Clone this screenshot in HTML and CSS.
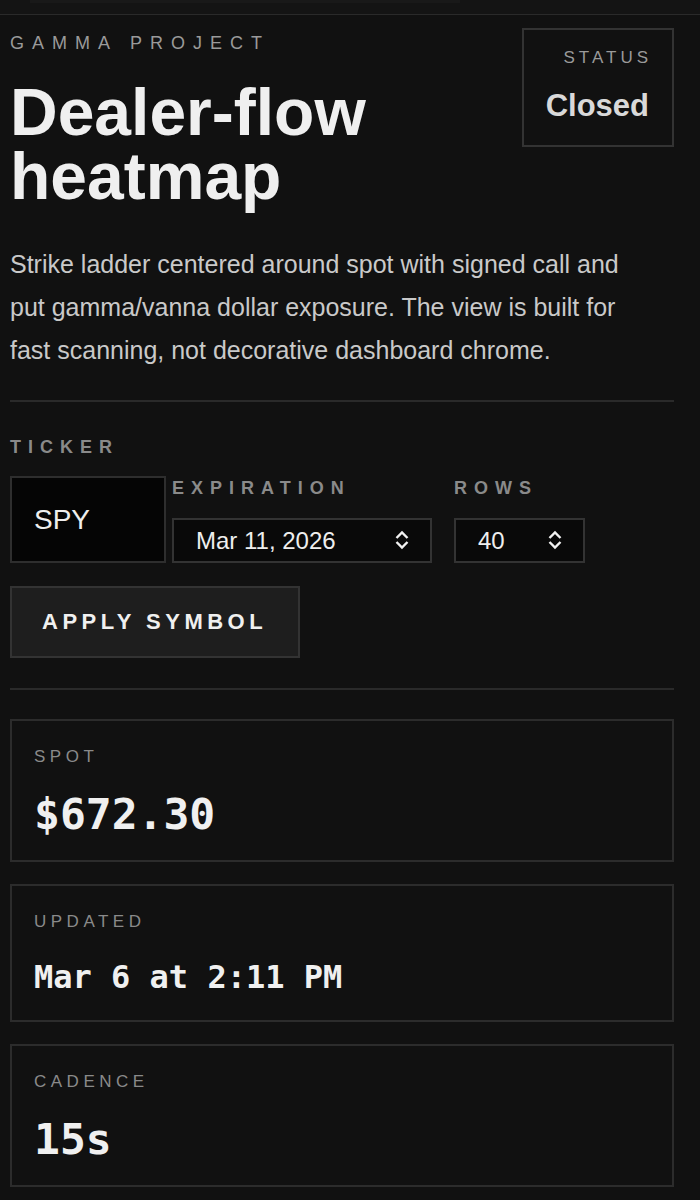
FILE: index.html
```
<!DOCTYPE html>
<html lang="en">
<head>
    <meta charset="UTF-8">
    <meta name="viewport" content="width=device-width, initial-scale=1.0">
    <title>Dealer-flow heatmap</title>
    <link rel="stylesheet" href="styles.css">
</head>
<body>
    <div class="topbar"><div class="topbar-inner"></div></div>

    <main class="page">
        <header class="hero">
            <div class="hero-text">
                <p class="eyebrow">Gamma Project</p>
                <h1 class="title">Dealer-flow heatmap</h1>
            </div>
            <div class="status">
                <span class="status-label">Status</span>
                <span class="status-value">Closed</span>
            </div>
        </header>

        <p class="lede">Strike ladder centered around spot with signed call and put gamma/vanna dollar exposure. The view is built for fast scanning, not decorative dashboard chrome.</p>

        <div class="rule"></div>

        <form class="controls" onsubmit="return false">
            <label class="field-label" for="ticker">Ticker</label>
            <div class="control-row">
                <input id="ticker" class="ticker-input" type="text" value="SPY">

                <div class="field field-exp">
                    <label class="field-label" for="expiration">Expiration</label>
                    <div class="select-box">
                        <select id="expiration">
                            <option>Mar 11, 2026</option>
                            <option>Mar 13, 2026</option>
                            <option>Mar 20, 2026</option>
                        </select>
                        <svg class="chevrons" width="16" height="22" viewBox="0 0 16 22">
                            <path d="M2.5 9 L8 3.5 L13.5 9 M2.5 13 L8 18.5 L13.5 13" fill="none" stroke="#f2f2f2" stroke-width="2.4"/>
                        </svg>
                    </div>
                </div>

                <div class="field field-rows">
                    <label class="field-label" for="rows">Rows</label>
                    <div class="select-box">
                        <select id="rows">
                            <option>40</option>
                            <option>60</option>
                            <option>80</option>
                        </select>
                        <svg class="chevrons" width="16" height="22" viewBox="0 0 16 22">
                            <path d="M2.5 9 L8 3.5 L13.5 9 M2.5 13 L8 18.5 L13.5 13" fill="none" stroke="#f2f2f2" stroke-width="2.4"/>
                        </svg>
                    </div>
                </div>
            </div>

            <button class="apply" type="submit">Apply symbol</button>
        </form>

        <div class="rule rule-lower"></div>

        <section class="stats">
            <div class="stat">
                <div class="stat-label">Spot</div>
                <div class="stat-value stat-value-lg">$672.30</div>
            </div>
            <div class="stat">
                <div class="stat-label">Updated</div>
                <div class="stat-value stat-value-sm">Mar 6 at 2:11 PM</div>
            </div>
            <div class="stat">
                <div class="stat-label">Cadence</div>
                <div class="stat-value stat-value-lg">15s</div>
            </div>
        </section>
    </main>
</body>
</html>
```

FILE: styles.css
```
body {
    margin: 0;
    background-color: #111111;
    color: #eeeeee;
    font-family: "Liberation Sans", Arial, sans-serif;
}

.topbar {
    height: 14px;
    background-color: #141414;
    border-bottom: 1px solid #2a2a2a;
}

.topbar-inner {
    height: 3px;
    margin: 0 240px 0 30px;
    background-color: #191919;
}

.page {
    width: 664px;
    padding: 0 0 40px 10px;
}

/* header */
.hero {
    display: flex;
    justify-content: space-between;
    align-items: flex-start;
    margin-top: 13px;
}

.hero-text {
    flex: 1;
}

.eyebrow {
    margin: 4px 0 0;
    font-size: 18px;
    line-height: 22px;
    letter-spacing: 8px;
    text-transform: uppercase;
    color: #9a9a9a;
}

.title {
    margin: 26px 0 0;
    font-size: 66px;
    line-height: 64px;
    font-weight: bold;
    color: #efefef;
}

.status {
    display: flex;
    flex-direction: column;
    align-items: flex-end;
    width: 102px;
    padding: 18px 23px 21px;
    border: 2px solid #333333;
}

.status-label {
    font-size: 17px;
    line-height: 20px;
    letter-spacing: 4px;
    margin-right: -3px;
    text-transform: uppercase;
    color: #9a9a9a;
}

.status-value {
    margin-top: 20px;
    font-size: 31px;
    line-height: 36px;
    font-weight: bold;
    color: #d9d9d9;
}

.lede {
    max-width: 640px;
    margin: 35px 0 0;
    font-size: 25px;
    line-height: 43px;
    color: #c9c9c9;
}

.rule {
    height: 2px;
    margin-top: 28px;
    background-color: #2a2a2a;
}

.rule-lower {
    margin-top: 30px;
}

/* controls */
.controls {
    margin-top: 34px;
}

.field-label {
    display: block;
    font-size: 18px;
    line-height: 22px;
    font-weight: bold;
    letter-spacing: 7px;
    text-transform: uppercase;
    color: #8a8a8a;
}

.control-row {
    display: flex;
    align-items: flex-end;
    margin-top: 18px;
}

.ticker-input {
    box-sizing: border-box;
    width: 156px;
    height: 87px;
    margin: 0;
    padding: 0 22px;
    border: 2px solid #2e2e2e;
    background-color: #050505;
    color: #eeeeee;
    font-family: "Liberation Sans", Arial, sans-serif;
    font-size: 28px;
    outline: none;
}

.field {
    display: flex;
    flex-direction: column;
    gap: 19px;
}

.field-exp {
    margin-left: 6px;
    width: 260px;
}

.field-rows {
    margin-left: 22px;
    width: 131px;
}

.select-box {
    position: relative;
}

.select-box select {
    box-sizing: border-box;
    width: 100%;
    height: 45px;
    margin: 0;
    padding: 0 22px;
    border: 2px solid #333333;
    border-radius: 0;
    background-color: #090909;
    color: #eeeeee;
    font-family: "Liberation Sans", Arial, sans-serif;
    font-size: 24px;
    appearance: none;
    -webkit-appearance: none;
    outline: none;
}

.chevrons {
    position: absolute;
    top: 11px;
    right: 22px;
    pointer-events: none;
}

.apply {
    display: block;
    height: 72px;
    margin-top: 23px;
    padding: 0 31px 0 30px;
    border: 2px solid #333333;
    background-color: #1e1e1e;
    color: #f0f0f0;
    font-family: "Liberation Sans", Arial, sans-serif;
    font-size: 22px;
    font-weight: bold;
    letter-spacing: 4.5px;
    text-transform: uppercase;
    cursor: pointer;
}

/* stats */
.stats {
    display: flex;
    flex-direction: column;
    gap: 22px;
    margin-top: 29px;
}

.stat {
    padding: 26px 22px 22px;
    border: 2px solid #2c2c2c;
}

.stat-label {
    font-size: 17px;
    line-height: 20px;
    letter-spacing: 4.5px;
    text-transform: uppercase;
    color: #8a8a8a;
}

.stat-value {
    margin-top: 24px;
    font-family: "DejaVu Sans Mono", "Liberation Mono", monospace;
    font-weight: bold;
    color: #f0f0f0;
    line-height: 47px;
}

.stat-value-lg {
    font-size: 43px;
}

.stat-value-sm {
    font-size: 32px;
    line-height: 42px;
}
```
